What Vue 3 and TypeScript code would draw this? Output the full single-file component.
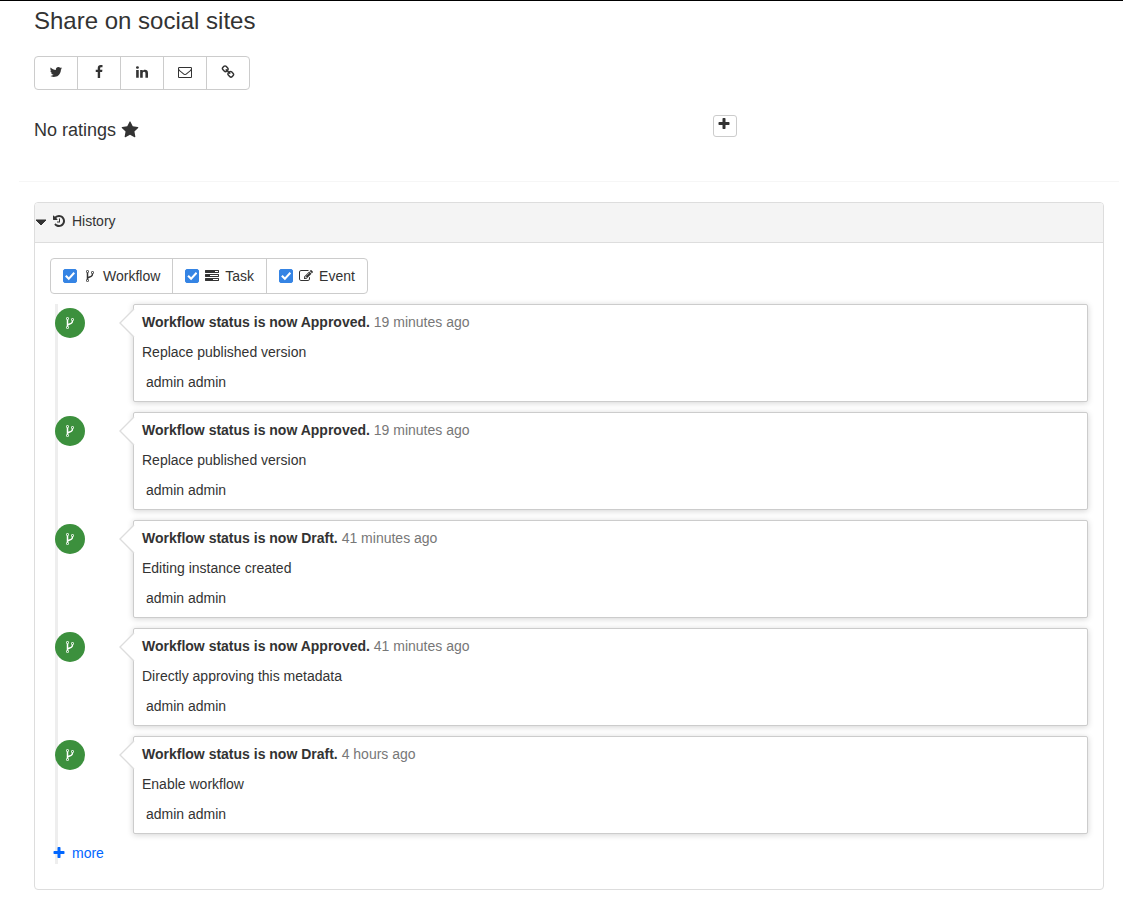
<script setup lang="ts">
import { ref } from 'vue'

const icons = {
  twitter: 'M1684 408q-67 98-162 167 1 14 1 42 0 130-38 259.5t-115.5 248.5-184.5 210.5-258 146-323 54.5q-271 0-496-145 35 4 78 4 225 0 401-138-105-2-188-64.5t-114-159.5q33 5 61 5 43 0 85-11-112-23-185.5-111.5t-73.5-205.5v-4q68 38 146 41-66-44-105-115t-39-154q0-88 44-163 121 149 294.5 238.5t371.5 99.5q-8-38-8-74 0-134 94.5-228.5t228.5-94.5q140 0 236 102 109-21 205-78-37 115-142 178 93-10 186-50z',
  facebook: 'M1343 12v264h-157q-86 0-116 36t-30 108v189h293l-39 296h-254v759h-306v-759h-255v-296h255v-218q0-186 104-288.5t277-102.5q147 0 228 12z',
  linkedin: 'M477 625v991h-330v-991h330zm21-306q1 73-50.5 122t-135.5 49h-2q-82 0-132-49t-50-122q0-74 51.5-122.5t134.5-48.5 133 48.5 51 122.5zm1166 729v568h-329v-530q0-105-40.5-164.5t-126.5-59.5q-63 0-105.5 34.5t-63.5 85.5q-11 30-11 81v553h-329q2-399 2-647t-1-296l-1-48h329v144h-2q20-32 41-56t56.5-52 87-43.5 114.5-15.5q171 0 275 113.5t104 332.5z',
  envelope: 'M1664 1504v-768q-32 36-69 66-268 206-426 338-51 43-83 67t-86.5 48.5-102.5 24.5h-2q-48 0-102.5-24.5t-86.5-48.5-83-67q-158-132-426-338-37-30-69-66v768q0 13 9.5 22.5t22.5 9.5h1472q13 0 22.5-9.5t9.5-22.5zm0-1051v-24.5l-.5-13-3-12.5-5.5-9-9-7.5-14-2.5h-1472q-13 0-22.5 9.5t-9.5 22.5q0 168 147 284 193 152 401 317 6 5 35 29.5t46 37.5 44.5 31.5 50.5 27.5 43 9h2q20 0 43-9t50.5-27.5 44.5-31.5 46-37.5 35-29.5q208-165 401-317 54-43 100.5-115.5t46.5-131.5zm128-37v1088q0 66-47 113t-113 47h-1472q-66 0-113-47t-47-113v-1088q0-66 47-113t113-47h1472q66 0 113 47t47 113z',
  link: 'M1520 1216q0-40-28-68l-208-208q-28-28-68-28-42 0-72 32 3 3 19 18.5t21.5 21.5 15 19 13 25.5 3.5 27.5q0 40-28 68t-68 28q-15 0-27.5-3.5t-25.5-13-19-15-21.5-21.5-18.5-19q-33 31-33 73 0 40 28 68l206 207q27 27 68 27 40 0 68-26l147-146q28-28 28-67zm-703-705q0-40-28-68l-206-207q-28-28-68-28-39 0-68 27l-147 146q-28 28-28 67 0 40 28 68l208 208q27 27 68 27 42 0 72-31-3-3-19-18.5t-21.5-21.5-15-19-13-25.5-3.5-27.5q0-40 28-68t68-28q15 0 27.5 3.5t25.5 13 19 15 21.5 21.5 18.5 19q33-31 33-73zm895 705q0 120-85 203l-147 146q-83 83-203 83-121 0-204-85l-206-207q-83-83-83-203 0-123 88-209l-88-88q-86 88-208 88-120 0-204-84l-208-208q-84-84-84-204t85-203l147-146q83-83 203-83 121 0 204 85l206 207q83 83 83 203 0 123-88 209l88 88q86-88 208-88 120 0 204 84l208 208q84 84 84 204z',
  star: 'M1728 647q0 22-26 48l-363 354 86 500q1 7 1 20 0 21-10.5 35.5t-30.5 14.5q-19 0-40-12l-449-236-449 236q-22 12-40 12-21 0-31.5-14.5t-10.5-35.5q0-6 2-20l86-500-364-354q-25-27-25-48 0-37 56-46l502-73 225-455q19-41 49-41t49 41l225 455 502 73q56 9 56 46z',
  plus: 'M1600 736v192q0 40-28 68t-68 28h-416v416q0 40-28 68t-68 28h-192q-40 0-68-28t-28-68v-416h-416q-40 0-68-28t-28-68v-192q0-40 28-68t68-28h416v-416q0-40 28-68t68-28h192q40 0 68 28t28 68v416h416q40 0 68 28t28 68z',
  history: 'M1664 896q0 156-61 298t-164 245-245 164-298 61q-172 0-327-72.5t-264-204.5q-7-10-6.5-22.5t8.5-20.5l137-138q10-9 25-9 16 2 23 12 73 95 179 147t225 52q104 0 198.5-40.5t163.5-109.5 109.5-163.5 40.5-198.5-40.5-198.5-109.5-163.5-163.5-109.5-198.5-40.5q-98 0-188 35.5t-160 101.5l137 138q31 30 14 69-17 40-59 40h-448q-26 0-45-19t-19-45v-448q0-42 40-59 39-17 69 14l130 129q107-101 244.5-156.5t284.5-55.5q156 0 298 61t245 164 164 245 61 298zm-640-288v448q0 14-9 23t-23 9h-320q-14 0-23-9t-9-23v-64q0-14 9-23t23-9h224v-352q0-14 9-23t23-9h64q14 0 23 9t9 23z',
  fork: 'M672 1472q0-40-28-68t-68-28-68 28-28 68 28 68 68 28 68-28 28-68zm0-1152q0-40-28-68t-68-28-68 28-28 68 28 68 68 28 68-28 28-68zm640 128q0-40-28-68t-68-28-68 28-28 68 28 68 68 28 68-28 28-68zm96 0q0 52-26 96.5t-70 69.5q-2 287-226 414-68 38-203 81-128 40-169.5 71t-41.5 100v26q44 25 70 69.5t26 96.5q0 80-56 136t-136 56-136-56-56-136q0-52 26-96.5t70-69.5v-820q-44-25-70-69.5t-26-96.5q0-80 56-136t136-56 136 56 56 136q0 52-26 96.5t-70 69.5v497q54-26 154-57 55-17 87.5-29.5t70.5-31 59-39.5 40.5-51 28-69.5 8.5-91.5q-44-25-70-69.5t-26-96.5q0-80 56-136t136-56 136 56 56 136z',
  tasks: 'M1024 1408h640v-128h-640v128zm-384-512h1024v-128h-1024v128zm640-512h384v-128h-384v128zm512 832v256q0 26-19 45t-45 19h-1664q-26 0-45-19t-19-45v-256q0-26 19-45t45-19h1664q26 0 45 19t19 45zm0-512v256q0 26-19 45t-45 19h-1664q-26 0-45-19t-19-45v-256q0-26 19-45t45-19h1664q26 0 45 19t19 45zm0-512v256q0 26-19 45t-45 19h-1664q-26 0-45-19t-19-45v-256q0-26 19-45t45-19h1664q26 0 45 19t19 45z',
  edit: 'M888 1184l116-116-152-152-116 116v56h96v96h56zm440-720q-16-16-33 1l-350 350q-17 17-1 33t33-1l350-350q17-17 1-33zm80 594v190q0 119-84.5 203.5t-203.5 84.5h-832q-119 0-203.5-84.5t-84.5-203.5v-832q0-119 84.5-203.5t203.5-84.5h832q63 0 117 25 15 7 18 23 3 17-9 29l-49 49q-14 14-32 8-23-6-45-6h-832q-66 0-113 47t-47 113v832q0 66 47 113t113 47h832q66 0 113-47t47-113v-126q0-13 9-22l64-64q15-15 35-7t20 29zm-96-738l288 288-672 672h-288v-288zm444 132l-92 92-288-288 92-92q28-28 68-28t68 28l152 152q28 28 28 68t-28 68z',
  caret: 'M1408 704q0 26-19 45l-448 448q-19 19-45 19t-45-19l-448-448q-19-19-19-45t19-45 45-19h896q26 0 45 19t19 45z',
}

const shares = [
  { label: 'Twitter', icon: icons.twitter },
  { label: 'Facebook', icon: icons.facebook },
  { label: 'LinkedIn', icon: icons.linkedin },
  { label: 'Email', icon: icons.envelope },
  { label: 'Permalink', icon: icons.link },
]

const filters = ref([
  { id: 'workflow', label: 'Workflow', icon: icons.fork, on: true },
  { id: 'task', label: 'Task', icon: icons.tasks, on: true },
  { id: 'event', label: 'Event', icon: icons.edit, on: true },
])

const events = [
  { status: 'Approved', when: '19 minutes ago', note: 'Replace published version', user: 'admin admin' },
  { status: 'Approved', when: '19 minutes ago', note: 'Replace published version', user: 'admin admin' },
  { status: 'Draft', when: '41 minutes ago', note: 'Editing instance created', user: 'admin admin' },
  { status: 'Approved', when: '41 minutes ago', note: 'Directly approving this metadata', user: 'admin admin' },
  { status: 'Draft', when: '4 hours ago', note: 'Enable workflow', user: 'admin admin' },
]
</script>

<template>
  <main class="page">
    <section class="share">
      <h3>Share on social sites</h3>
      <div class="btn-group">
        <button v-for="s in shares" :key="s.label" type="button" class="btn" :aria-label="s.label">
          <svg class="icon" viewBox="0 0 1792 1792"><path :d="s.icon" /></svg>
        </button>
      </div>
    </section>

    <section class="ratings">
      <h4>No ratings <svg class="star" viewBox="0 0 1792 1792"><path :d="icons.star" /></svg></h4>
      <button type="button" class="add" aria-label="Add a rating">
        <svg class="icon" viewBox="0 0 1792 1792"><path :d="icons.plus" /></svg>
      </button>
    </section>

    <hr />

    <section class="panel">
      <header class="panel-head">
        <svg class="caret" viewBox="0 0 12 14"><path d="M1 6H11L6 11Z" /></svg>
        <svg class="icon wide" viewBox="0 0 1792 1792"><path :d="icons.history" /></svg>
        <span>History</span>
      </header>
      <div class="panel-body">
        <div class="btn-group">
          <label v-for="f in filters" :key="f.id" class="btn filter" :for="f.id">
            <input :id="f.id" v-model="f.on" type="checkbox" />
            <svg class="icon wide" viewBox="0 0 1792 1792"><path :d="f.icon" /></svg>
            <span>{{ f.label }}</span>
          </label>
        </div>
        <div class="timeline">
          <ul>
            <li v-for="(e, i) in events" :key="i">
              <span class="badge">
                <svg class="icon" viewBox="0 0 1792 1792"><path :d="icons.fork" /></svg>
              </span>
              <article class="card">
                <svg class="pointer" viewBox="0 0 16 30">
                  <path class="fill" d="M16 1H15L1 15L15 29H16Z" />
                  <path class="edge" d="M15 1L1 15L15 29" />
                </svg>
                <p><strong>Workflow status is now {{ e.status }}.</strong> <span class="when">{{ e.when }}</span></p>
                <p>{{ e.note }}</p>
                <p class="user">{{ e.user }}</p>
              </article>
            </li>
          </ul>
          <a href="#" class="more">
            <svg class="icon wide" viewBox="0 0 1792 1792"><path :d="icons.plus" /></svg>
            <span>more</span>
          </a>
        </div>
      </div>
    </section>
  </main>
</template>

<style>
body {
  margin: 0;
  background: #fff;
}
</style>

<style scoped>
.page {
  border-top: 1px solid #000;
  padding: 0 19px 25px 34px;
  color: #333;
  font: 14px/20px "Liberation Sans", Arial, sans-serif;
}
h3,
h4,
p,
ul {
  margin: 0;
  padding: 0;
  font-weight: 400;
}
h3 {
  padding-top: 7px;
  font-size: 24px;
  line-height: 26px;
}
h4 {
  padding-top: 5px;
  font-size: 18px;
  line-height: 20px;
}
.icon {
  display: block;
  flex: none;
  width: 14px;
  height: 14px;
  fill: currentColor;
}
.icon.wide {
  width: 18px;
}
.star {
  width: 18px;
  height: 18px;
  fill: currentColor;
  vertical-align: -3px;
}
.btn-group {
  display: flex;
  width: max-content;
  border: 1px solid #ccc;
  border-radius: 4px;
  background: #fff;
}
.btn {
  display: flex;
  align-items: center;
  margin: 0;
  padding: 8px 14px 10px;
  border: 0;
  background: transparent;
  color: inherit;
  font: inherit;
  cursor: pointer;
}
.btn + .btn {
  border-left: 1px solid #ccc;
}
.share .btn-group {
  margin-top: 22px;
}
.ratings {
  display: grid;
  grid-template-columns: 679fr 391fr;
  align-items: start;
  margin-top: 25px;
  min-height: 66px;
}
.add {
  width: 24px;
  height: 22px;
  padding: 1px 4px 5px 3px;
  border: 1px solid #ccc;
  border-radius: 3px;
  background: #fff;
  color: inherit;
}
hr {
  height: 1px;
  margin: 0 -15px 20px;
  border: 0;
  background: #f6f6f6;
}
.panel {
  border: 1px solid #ddd;
  border-radius: 4px;
}
.panel-head {
  display: flex;
  align-items: center;
  padding: 8px 0 11px;
  border-bottom: 1px solid #ddd;
  border-radius: 3px 3px 0 0;
  background: #f4f4f4;
}
.caret {
  width: 12px;
  height: 14px;
  fill: currentColor;
  stroke: currentColor;
  stroke-linejoin: round;
}
.panel-head .wide {
  margin: 0 4px 0 3px;
}
.panel-body {
  padding: 15px;
}
.filter {
  gap: 4px;
  padding: 7px 12px;
}
input {
  display: grid;
  place-items: center;
  width: 14px;
  height: 14px;
  margin: 0;
  border: 1px solid #767676;
  border-radius: 2px;
  appearance: none;
}
input:checked {
  border-color: #3584e4;
  background: #3584e4;
}
input:checked::before {
  content: "";
  width: 10px;
  height: 10px;
  background: #fff;
  clip-path: polygon(0 55%, 15% 40%, 38% 63%, 85% 10%, 100% 25%, 38% 92%);
}
.timeline {
  margin: 10px 0 10px 5px;
  border-left: 3px solid #eee;
}
ul {
  list-style: none;
}
li {
  display: flex;
  align-items: flex-start;
  margin-bottom: 10px;
}
.badge {
  display: grid;
  flex: none;
  place-items: center;
  width: 30px;
  height: 30px;
  margin: 4px 48px 0 -3px;
  border-radius: 50%;
  background: #3c903d;
  color: #fff;
}
.card {
  position: relative;
  flex: 1;
  padding: 2px 8px 4px;
  border: 1px solid #ccc;
  border-radius: 2px;
  background: #fff;
  box-shadow: 0 1px 6px rgba(0, 0, 0, 0.175);
}
.card p {
  padding: 5px 0;
}
.card .user {
  padding-left: 4px;
}
.when {
  color: #777;
}
.pointer {
  position: absolute;
  top: 3px;
  left: -15px;
  width: 16px;
  height: 30px;
}
.pointer .fill {
  fill: #fff;
}
.pointer .edge {
  fill: none;
  stroke: #ddd;
  stroke-width: 1.4;
}
.more {
  display: flex;
  align-items: center;
  width: max-content;
  margin-left: -8px;
  padding-bottom: 2px;
  gap: 4px;
  color: #0066ff;
  line-height: 18px;
  text-decoration: none;
}
</style>
